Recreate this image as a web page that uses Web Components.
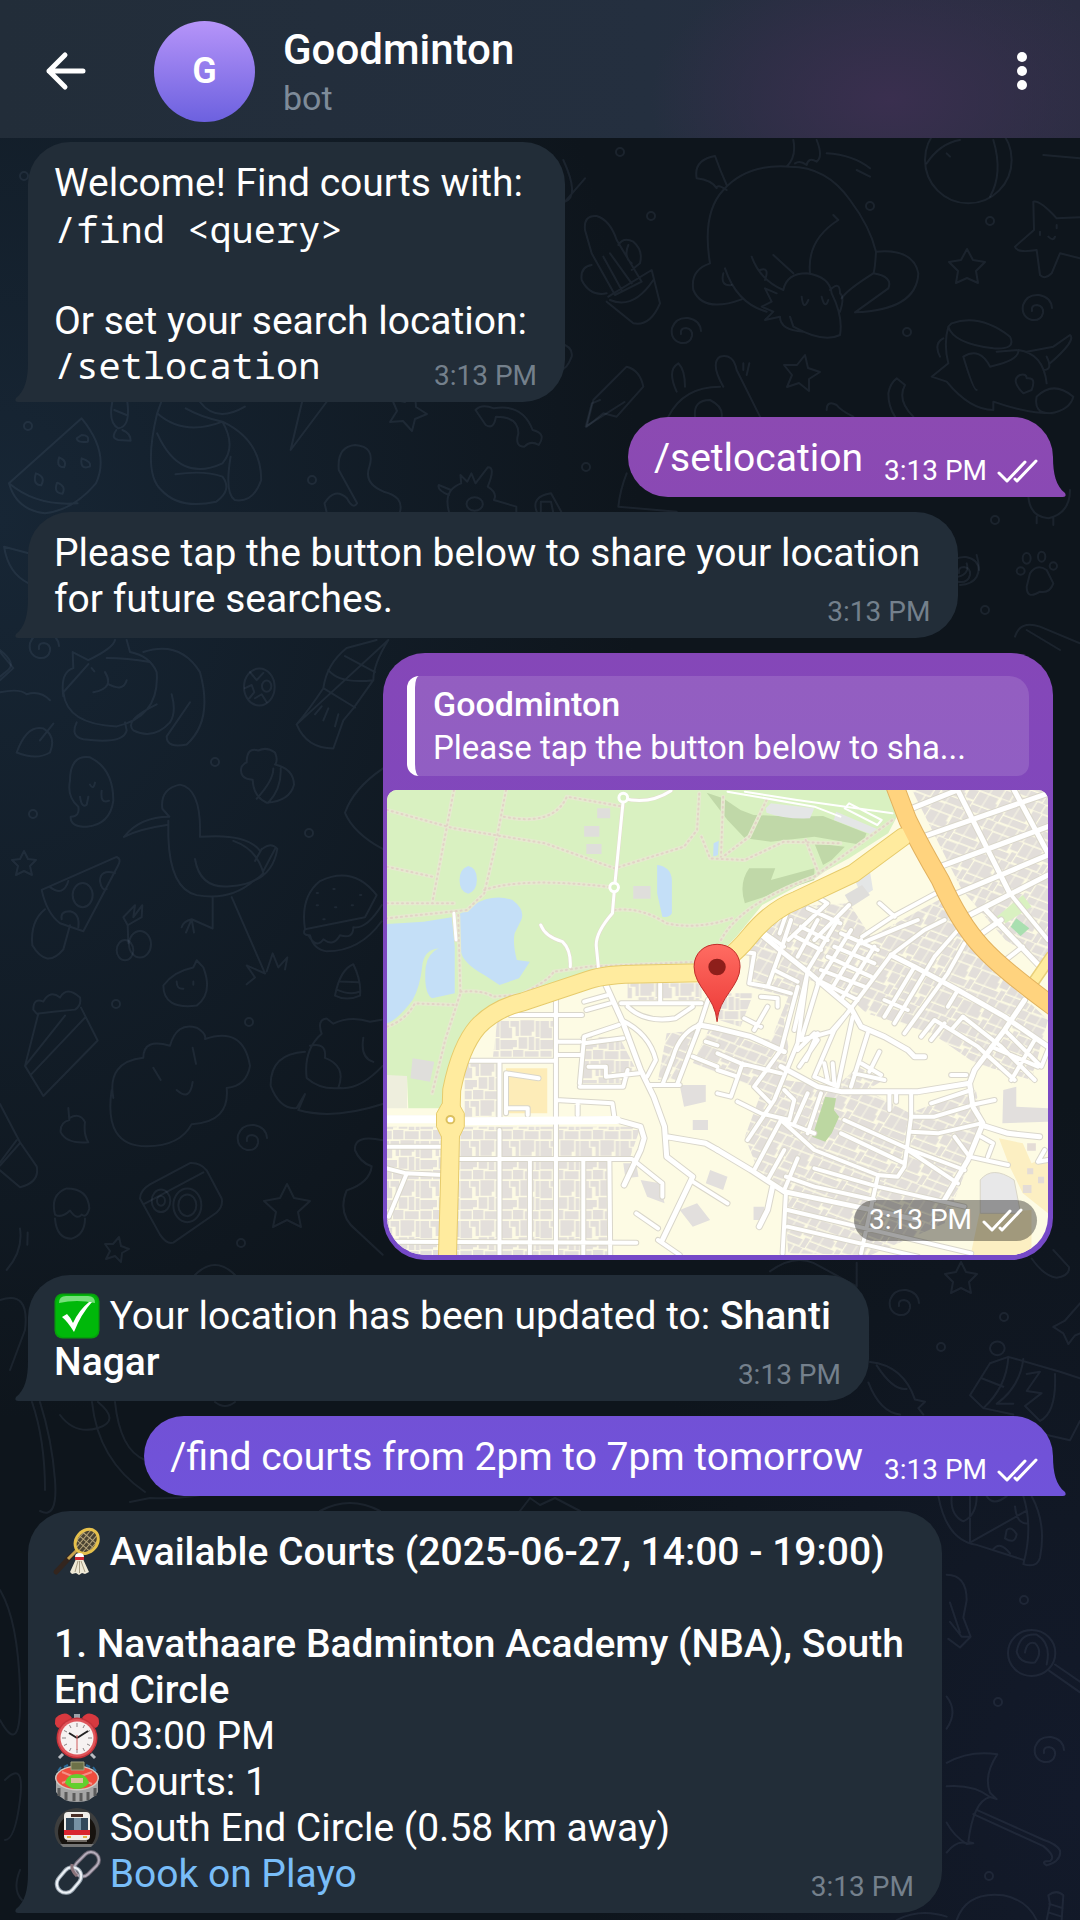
<!DOCTYPE html>
<html lang="en">
<head>
<meta charset="utf-8">
<meta name="viewport" content="width=device-width, initial-scale=1">
<title>Goodminton</title>
<style>
  html { background: #0e151d; }
  body { margin: 0; font-family: Roboto, "Noto Sans", sans-serif; color: #fff; }
</style>
</head>
<body>
<chat-app>
  <chat-header slot="header" name="Goodminton" status="bot" initial="G"></chat-header>

  <chat-bubble time="3:13 PM">Welcome! Find courts with:<br><mono-line>/find &lt;query&gt;</mono-line><br>Or set your search location:<br><mono-line>/setlocation</mono-line></chat-bubble>

  <chat-bubble out time="3:13 PM" style="--from:#8c4ab2;--to:#8a49b4">/setlocation</chat-bubble>

  <chat-bubble time="3:13 PM">Please tap the button below to share your location<br>for future searches.</chat-bubble>

  <location-bubble time="3:13 PM">
    <reply-quote name="Goodminton">Please tap the button below to sha...</reply-quote>
  </location-bubble>

  <chat-bubble time="3:13 PM"><emoji-icon name="check"></emoji-icon> Your location has been updated to: <b>Shanti<br>Nagar</b></chat-bubble>

  <chat-bubble out time="3:13 PM" style="--from:#7251d6;--to:#7053da">/find courts from 2pm to 7pm tomorrow</chat-bubble>

  <chat-bubble time="3:13 PM"><emoji-icon name="racket"></emoji-icon> <b>Available Courts (2025-06-27, 14:00 - 19:00)</b><br><br><b>1. Navathaare Badminton Academy (NBA), South<br>End Circle</b><br><emoji-icon name="clock"></emoji-icon> 03:00 PM<br><emoji-icon name="stadium"></emoji-icon> Courts: 1<br><emoji-icon name="metro"></emoji-icon> South End Circle (0.58 km away)<br><emoji-icon name="link"></emoji-icon> <a href="#book">Book on Playo</a></chat-bubble>
</chat-app>

<script>
const define = (name, html, setup) => {
  const template = document.createElement('template');
  template.innerHTML = html;
  customElements.define(name, class extends HTMLElement {
    constructor() {
      super();
      this.attachShadow({ mode: 'open' }).append(template.content.cloneNode(true));
    }
    connectedCallback() {
      if (setup && !this.ready) { this.ready = true; setup(this, this.shadowRoot); }
    }
  });
};

/* ---------- page shell ---------- */
define('chat-app', `
<style>
  :host { display: flex; flex-direction: column; min-height: 100vh; position: relative; isolation: isolate; overflow: hidden; }
  main { display: flex; flex-direction: column; align-items: flex-start; gap: 15px; padding: 4px 27px 7px 28px; }
</style>
<doodle-wallpaper></doodle-wallpaper>
<slot name="header"></slot>
<main><slot></slot></main>`);

/* ---------- header ---------- */
define('chat-header', `
<style>
  :host { display: block; }
  header { display: flex; align-items: center; box-sizing: border-box; min-height: 138px; padding: 4px 26px 0 34px;
    background: radial-gradient(ellipse 240px 150px at 890px 100px, #3a2f4f 0, #3a2f4f00 100%), linear-gradient(90deg, #222d39, #242f3f 60%, #2b2d42); }
  button { border: 0; padding: 0; background: none; color: #fff; display: flex; cursor: pointer; }
  .avatar { width: 101px; height: 101px; margin: 0 28px 0 56px; border-radius: 50%; display: grid; place-items: center;
    background: linear-gradient(#b694f9, #6c61df); font-size: 36px; font-weight: 600; line-height: 42px; }
  .who { flex: 1; min-width: 0; display: flex; flex-direction: column; gap: 3px; }
  h1 { margin: 0; font-size: 42px; line-height: 50px; font-weight: 500; }
  p { margin: 0; font-size: 34px; line-height: 40px; color: #7e8b99; }
</style>
<header>
  <button type="button" aria-label="Back"><svg width="64" height="64" viewBox="0 0 64 64" fill="none" stroke="#fff" stroke-width="5" stroke-linecap="round" stroke-linejoin="round"><path d="M49 32H15M31 16 15 32l16 16"/></svg></button>
  <div class="avatar" aria-hidden="true"></div>
  <div class="who"><h1></h1><p></p></div>
  <button type="button" aria-label="More options"><svg width="64" height="64" viewBox="0 0 64 64" fill="#fff"><circle cx="32" cy="18" r="5"/><circle cx="32" cy="32" r="5"/><circle cx="32" cy="46" r="5"/></svg></button>
</header>`, (el, root) => {
  root.querySelector('h1').textContent = el.getAttribute('name');
  root.querySelector('p').textContent = el.getAttribute('status');
  root.querySelector('.avatar').textContent = el.getAttribute('initial');
});

/* ---------- small parts ---------- */
define('mono-line', `
<style>
  :host { display: block; font-family: "Noto Sans Mono", "DejaVu Sans Mono", monospace; font-size: 37px; line-height: 46px; }
  :host(:last-child) { line-height: 42px; }
</style><slot></slot>`);

define('read-ticks', `
<style>:host { display: inline-flex; }</style>
<svg width="41" height="24" viewBox="0 0 41 24" fill="none" stroke="#fff" stroke-width="3" stroke-linecap="round" stroke-linejoin="round" role="img" aria-label="Read"><path d="M2 14l8 8L28 3M18 20l2 2L39 2"/></svg>`);

/* ---------- text bubble ---------- */
define('chat-bubble', `
<style>
  :host { display: grid; position: relative; max-width: 100%; box-sizing: border-box; padding: 18px 28px 16px 26px;
    background: #222d38; border-radius: 42px 42px 42px 0; font-size: 39px; line-height: 46px; }
  :host([out]) { align-self: flex-end; grid-template-columns: auto auto; gap: 21px; padding-right: 15px;
    border-radius: 40px 40px 0 40px; background: linear-gradient(var(--from), var(--to)); }
  .text, .meta { grid-area: 1 / 1; }
  .text { padding-right: 10px; }
  .meta { place-self: end; display: flex; align-items: center; gap: 10px; margin-bottom: -7px; font-size: 28px; line-height: 34px; color: #74808c; }
  :host([out]) .text { padding: 0; }
  :host([out]) .meta { grid-area: 1 / 2; color: #fff; }
  :host(:not([out])) read-ticks { display: none; }
  .tail { position: absolute; bottom: 0; left: -13px; fill: #222d38; }
  :host([out]) .tail { left: auto; right: -13px; transform: scaleX(-1); fill: var(--to); }
  ::slotted(b) { font-weight: 500; }
  ::slotted(a) { color: #79bdf8; text-decoration: none; }
</style>
<svg class="tail" width="14" height="40" viewBox="0 0 14 40" aria-hidden="true"><path d="M14 0H13C13 17 10 29 1 36Q-1 40 3 40H14Z"/></svg>
<div class="text"><slot></slot></div>
<div class="meta"><time></time><read-ticks></read-ticks></div>`, (el, root) => {
  root.querySelector('time').textContent = el.getAttribute('time');
});

/* ---------- quoted message ---------- */
define('reply-quote', `
<style>
  :host { display: block; overflow: hidden; box-sizing: border-box; padding: 6px 20px 6px 18px; border-left: 8px solid #fff; border-radius: 12px 20px 12px 12px;
    background: #ffffff20; font-size: 33px; line-height: 44px; }
  strong { display: block; font-size: 34px; font-weight: 500; }
  p { margin: 0; overflow: hidden; white-space: nowrap; text-overflow: ellipsis; }
</style>
<strong></strong><p><slot></slot></p>`, (el, root) => {
  root.querySelector('strong').textContent = el.getAttribute('name');
});

/* ---------- location bubble ---------- */
define('location-bubble', `
<style>
  :host { display: flex; flex-direction: column; align-self: flex-end; width: 670px; max-width: 100%; box-sizing: border-box; padding: 23px 5px 5px 4px;
    gap: 14px; border-radius: 42px; background: linear-gradient(#8547b8, #7549c8); }
  ::slotted(reply-quote) { margin: 0 19px 0 20px; }
  .map { position: relative; display: grid; }
  .badge { position: absolute; right: 11px; bottom: 14px; display: flex; align-items: center; gap: 10px; padding: 3px 14px 4px 15px; border-radius: 21px;
    background: #0000005c; font-size: 28px; line-height: 34px; }
</style>
<slot></slot>
<div class="map"><street-map></street-map><div class="badge"><time></time><read-ticks></read-ticks></div></div>`, (el, root) => {
  root.querySelector('time').textContent = el.getAttribute('time');
});

/* ---------- map drawing ---------- */
/* west half of the town */
const wide = [
  'M16 1018H130M195 1024L545 1020 600 1040 608 1075 600 1110 562 1215',
  'M660 1070L750 1090 777 1110',
  'M520 615L560 730 600 870 630 950 655 1040 660 1130 720 1190 650 1380',
  'M735 735L777 745',
  'M1225 85L1330 30M1255 168L1538 40M1285 262L1538 140M1315 348L1538 225M1350 410L1538 285M1375 470L1430 420',
  'M1330 30L1450 340M1460 30L1538 220M1395 390L1520 560',
].join('');
const thin = [
  'M16 1100H145M16 1165L60 1180 145 1185M60 1185L20 1310M180 1137H580L650 1210 650 1250',
  'M405 655V1425M275 850V1010M275 1050V1425M345 1137V1425M468 1137V1425M528 1137L530 1425M16 1385L590 1388M205 842H400M300 705H465M405 785H460M405 825H460M470 665L525 645M475 690L530 670',
  'M405 960L535 970 540 1015M455 965V1005M290 1000V880L365 895M290 985H340V1005',
  'M555 670H740M645 610V668M735 735Q690 760 675 830L650 915M555 720Q620 760 635 840L615 890M570 680Q610 730 680 715L720 680M755 660L735 740 685 910M460 910L470 770 550 735M470 790L560 775M460 920H560L570 870M480 860H520V890L595 880M620 915H690',
  'M850 480L940 385 920 460M875 450L930 500M1005 350L1030 370 940 480M1080 375L1000 480M985 385L1060 430M1280 340L1180 410 1110 470M1150 370L1185 410M720 1205L800 1270M590 1300L640 1345M640 1380L690 1425M750 785L777 796M720 830L777 860M1430 550L1480 500M1450 340L1538 480',
].join('');
/* east half, in its own finer frame */
const eastWide = [
  'M120 35L200 100 270 155 400 265 430 320 500 350 570 390 590 410H620',
  'M0 325L100 350 200 395M190 440L300 500 370 515H600L755 490 770 450 860 330 920 240',
  'M520 105L590 140 720 210 860 290 990 380M755 490L765 560 795 610 750 720 680 840',
  'M0 690L100 750 200 815 440 865 600 900M790 615L870 640 965 650M165 800L150 870 125 920',
].join('');
const eastThin = [
  'M0 400L70 430 190 460M0 450L60 470M0 520L40 530 75 430M190 90L150 200M240 200L190 390 110 500M270 155L230 330M360 0L270 150 240 370 170 540 90 660M190 600L110 750M305 180L250 360 340 335 380 290M240 390L290 340M245 440L300 360M265 420L300 340M400 265L350 330 290 470 360 500M405 290L360 500M450 340L400 500',
  'M250 20L330 60M235 50L310 90M370 40L480 90M350 80L470 130M330 110L460 170M310 150L440 200M300 180L420 240M300 190L400 30M340 210L430 60M370 240L470 80M400 265L520 105M220 0L190 90M300 0L240 110M430 70L550 20 600 0M520 105L620 30 680 0',
  'M500 290L590 140M530 310L650 110 720 30M560 340L690 160 740 70M500 240L570 270M610 350L650 300 700 330M640 360L680 310M690 260L720 210M700 330L735 290 850 380 950 480M700 330L780 380 890 480M820 380L960 440M860 330L970 440 990 390M880 480L950 360',
  'M700 465H745M410 460L500 480M430 430L490 465M485 395L455 455M320 430L330 480M345 430L350 490M580 515V590L560 740 540 770M515 520V570M535 520V545M580 590H650L750 560M580 635L660 640 790 610M640 550L760 510M760 555L830 540',
  'M710 650L755 710 870 735M790 650L825 670 810 710M380 600L580 690 740 750M370 640L560 730M540 770L480 765 290 690 190 600M290 745L480 800 740 860M240 715L200 810M480 770L430 1000M205 770L290 800 470 840M200 690L150 780M205 820L195 1000M210 870L420 920 760 1000M210 920L600 1010M570 690L720 790M980 690L960 725 990 720',
  'M60 545L130 580M110 500L160 550M130 580L215 600 230 540 200 510M270 520L230 610M310 520L270 640M190 600L290 640M70 95L110 100 95 190 150 200 220 220M130 230L180 235V260M150 260L110 330M80 295L130 320M170 150L240 185',
].join('');
const paths = 'M16 90L170 145 380 190 540 265 700 200 730 150 735 40M170 30L120 370M290 30L265 200 240 340 200 390 16 415M16 370H170M285 110Q400 140 430 50L560 80M16 260L120 290M240 330Q330 290 535 322M540 390Q600 380 660 430 730 450 810 415M785 480Q830 370 1000 290L1180 120M740 170L760 235 840 240 930 185 1060 190M790 50L785 230M890 60L850 170 790 230M980 180L1010 280M185 635Q240 630 260 650L320 645M180 405L185 640 150 780 120 940M16 740Q60 720 80 670L175 675M330 640Q390 600 400 575L480 560 740 545';
const ringRoad = 'M155 1440L160 1200 163 1018 165 930Q185 800 225 740 265 685 330 665L480 600Q520 582 600 582L740 578Q800 550 850 470 900 390 960 360L1090 280 1205 170';
const highway = 'M1183 10L1215 120Q1245 200 1290 300 1335 430 1385 500 1430 565 1550 680';
const lanes = 'M170 400L175 480M560 60L540 322 535 400Q495 460 498 500L503 565M560 55Q620 75 670 32M370 435Q380 470 420 485 440 510 438 560';
define('street-map', `
<style>
  :host { display: block; aspect-ratio: 661 / 465; overflow: hidden; border-radius: 10px 10px 38px 38px; }
  svg { display: block; width: 100%; height: 100%; }
  path, circle, ellipse { vector-effect: non-scaling-stroke; }
  .road path { fill: none; stroke-linecap: round; stroke-linejoin: round; }
</style>
<svg viewBox="16 30 1522 1395" preserveAspectRatio="none" role="img" aria-label="Map with a pin on the shared location">
  <defs>
    <pattern id="flat" width="92" height="120" patternUnits="userSpaceOnUse"><path d="M1 3h20v20h7v32H1zM24 3h20v45h-8V20H24zM47 1h32v34h-6v12H47zM82 3h9v48h-9zM1 60h38v22h-9v6H1zM1 92h26v26H1zM30 90h24v28H30zM43 52h20v34H43zM66 50h13v40H66zM82 55h9v35h-9zM57 94h32v24H57z" fill="#e3dfdb"/></pattern>
    <pattern id="slope" width="80" height="96" patternUnits="userSpaceOnUse" patternTransform="rotate(26)"><path d="M1 2h24v18h5v20H1zM32 1h22v30H34zM57 2h22v38H57zM1 44h38v20H1zM42 36h12v30H42zM57 44h22v20H57zM1 68h26v26H1zM30 68h20v26H30zM53 70h26v24H53z" fill="#e2deda"/></pattern>
    <linearGradient id="pin" x2="0" y2="1"><stop offset="0" stop-color="#ff6c62"/><stop offset="1" stop-color="#ec3a37"/></linearGradient>
  </defs>
  <path d="M0 0H1560V1440H0Z" fill="#fdfbe4"/>
  <path d="M16 1040H600L575 1135H525V1425H16ZM195 850H270V1010H195ZM270 720H400V830H260ZM460 770H550L590 870 560 910H460ZM570 610H740V660H570ZM780 640H860L830 740 780 720Z" fill="url(#flat)"/>
  <path d="M1225 30H1538V560L1440 480 1340 330ZM850 430L950 380 1080 370 1130 470 1300 350 1440 600 1538 720 1500 900 1370 850 1270 760 1120 700 1070 640 990 600 930 720 940 800 930 900 1050 920 1100 860 1160 900 1120 930 1220 1000 1370 920 1390 1040 1300 1330 1130 1425 940 1420 930 1250 870 1170 840 1070 880 930 720 850 760 740 900 780 940 650 850 620ZM660 760L740 750 690 900 640 900Z" fill="url(#slope)"/>
  <path d="M690 915h60v50l-50 15zM720 1020h35v30h-35zM690 1290l40-20 30 50-40 20zM760 1170l40 20-10 40-40-20zM860 1280h25v40h-25zM600 1200l45 10 10 60-40-20zM560 1150l30 0 5 40-30 5zM1435 930l30-10v60l73 5v40l-105 5z" fill="#e2dfdd"/>
  <path d="M290 865H385V1000H290Z" fill="#fdecb8"/>
  <path d="M1425 1075L1480 1090 1500 1150 1538 1130V1300L1480 1240 1450 1160ZM1380 1300L1500 1290V1425H1360Z" fill="#fcefc2"/>
  <path d="M1490 1090h20v22h-20zM1490 1165h14v18h-14zM1480 1215h20v24h-20zM1515 1190h14v20h-14z" fill="#e4dcd6"/>
  <path d="M1382 1300V1200Q1410 1155 1460 1200L1475 1300Z" fill="#e8e8e9" stroke="#d9d6c8"/>
  <path d="M1025 950L1050 955 1045 990 1057 1010 1040 1060 1025 1085 995 1070Z" fill="#bcd7a1"/>
  <path d="M1480 345L1500 380 1440 430 1420 410Z" fill="#d9f1c1"/><path d="M1465 415L1495 445 1475 468 1452 440Z" fill="#a9dfb0"/>
  <path d="M16 885H62V985H16Z" fill="#eeeedd"/>
  <path d="M16 30H1175L1190 110 1170 160 1080 235 880 375 820 470 760 550 500 570Q400 600 300 660 220 720 190 800 150 900 140 985H65L62 888 16 885Z" fill="#d9f1c1"/>
  <path d="M752 38L790 55 830 90 860 105 950 110 1020 108 1120 160 1110 195 1000 170 900 185 840 175 800 120ZM850 265L910 265 900 300 1000 265 1000 300 840 370Q825 310 850 265ZM1000 190L1070 200 1040 240 1020 255Z" fill="#c0d8a8"/>
  <path d="M888 85L900 70 1000 85 990 115Q930 118 890 98ZM1050 95L1150 150 1135 165 1045 120ZM1090 290L1125 250 1135 330 1110 350Z" fill="#e4e6e6"/>
  <path d="M470 138h35v32h-35zM500 85h30v30h-30zM475 192h35v30h-35zM583 318h40v38h-40zM75 835l50 10-10 60-45-10zM1070 345l40-30 18 30-42 35z" fill="#dfdedb"/>
  <path d="M16 432L100 425 165 412 172 500V640L120 655Q100 640 105 560 110 520 135 505 100 510 97 560 92 620 75 660 40 720 16 730ZM180 405L215 375Q260 340 305 360 335 390 325 420L310 460Q305 490 315 540L345 545 320 595 275 615 240 585Q190 550 185 510ZM638 255Q670 260 672 300V400Q665 415 650 410L638 340ZM768 190L780 182 778 225 767 230ZM203 258q20 5 20 40t-20 43q-20-5-20-40t20-43z" fill="#c4dff7"/>
  <g class="road">
    <path d="${paths}" stroke="#e6ead0" stroke-width="4"/><path d="${paths}" stroke="#e2d3c6" stroke-width="2" stroke-dasharray="1 4"/>
    <path d="${lanes}" stroke="#e3dccf" stroke-width="4"/><path d="${lanes}" stroke="#fff" stroke-width="3"/>
    <path d="M800 35L1000 80 1060 110M840 35L960 60 1180 100M1070 85L1080 70 1155 120 1145 135Z" stroke="#fff" stroke-width="2"/>
    <path d="${thin}" stroke="#d9d6ca" stroke-width="6"/><path d="${wide}" stroke="#d9d6ca" stroke-width="7"/>
    <g transform="translate(777 420) scale(.7687 1)"><path d="${eastThin}" stroke="#dad7cc" stroke-width="6"/><path d="${eastWide}" stroke="#dad7cc" stroke-width="7"/></g>
    <path d="${thin}" stroke="#fff" stroke-width="4"/><path d="${wide}" stroke="#fff" stroke-width="5"/>
    <g transform="translate(777 420) scale(.7687 1)"><path d="${eastThin}" stroke="#fff" stroke-width="4"/><path d="${eastWide}" stroke="#fff" stroke-width="5"/></g>
    <path d="M16 1018H130M195 1024L545 1020" stroke="#fff" stroke-width="8"/>
    <path d="M1500 615L1545 530" stroke="#e8cf7a" stroke-width="12"/><path d="M1500 615L1545 530" stroke="#ffec9f" stroke-width="9"/>
    <path d="${ringRoad}" stroke="#e6cb6c" stroke-width="19"/>
    <path d="${highway}" stroke="#e2b25f" stroke-width="19"/>
  </g>
  <path d="M143 970L130 1000V1040L143 1075H181L194 1040V1000L181 970Z" fill="#ffeb9e" stroke="#e6cb6c"/>
  <g class="road">
    <path d="${ringRoad}" stroke="#ffeb9e" stroke-width="17"/>
    <path d="${highway}" stroke="#ffd37e" stroke-width="17"/>
  </g>
  <ellipse cx="162" cy="1019" rx="9" ry="11" fill="#fff" stroke="#dcc05f" stroke-width="2"/>
  <ellipse cx="560" cy="53" rx="10" ry="13" fill="#d9f1c1" stroke="#fff" stroke-width="3"/><ellipse cx="539" cy="322" rx="10" ry="13" fill="#d9f1c1" stroke="#fff" stroke-width="3"/>
  <path d="M776 725C772 650 723 620 723 560 723 520 746 493 776 493S829 520 829 560C829 620 780 650 776 725Z" fill="url(#pin)" stroke="#bf2f2c" stroke-width="1"/>
  <ellipse cx="776" cy="561" rx="20" ry="25" fill="#8e1f1b"/>
</svg>`);

/* ---------- emoji ---------- */
const emoji = {
  check: ['Done', `<rect x=".5" y=".5" width="45" height="45" rx="8" fill="#079f0c"/><rect x="2" y="2" width="42" height="42" rx="7" fill="#00b80a"/><path d="M5 10Q5 3 12 3H34Q41 3 41 10Q23 6 5 10Z" fill="#76e07a"/><path d="M8 24l5-3q4 4 6 9 6-13 16-21h3Q27 21 20 39Q14 29 8 24Z" fill="#fff"/>`],
  racket: ['Badminton', `<path d="M2 43L17 27" stroke="#33251e" stroke-width="5" stroke-linecap="round"/><path d="M14 30L24 20" stroke="#c9a34e" stroke-width="3"/><g transform="rotate(40 33 12)"><ellipse cx="33" cy="12.500" rx="10.500" ry="13" fill="#4b4433"/><path d="M25 4V21M29 1V24M33 0V25M37 1V24M41 4V21M23 8H43M22 13H44M23 18H43" stroke="#b7a57b"/><ellipse cx="33" cy="12.500" rx="10.500" ry="13" fill="none" stroke="#e5c04c" stroke-width="3"/></g><path d="M22 30h7l6 13-4 2-3-1-3 2-3-2-4 1-2-2z" fill="#efe9d6"/><path d="M24 32l-3 11M25.500 32V44M27 32l4 11" stroke="#a99f87"/><path d="M21 28h9v3h-9z" fill="#d22c34"/><path d="M21 28q0-4 4.500-4t4.500 4z" fill="#fff"/>`],
  clock: ['Alarm clock', `<path d="M9 41l-4 4M37 41l4 4" stroke="#b9bcc2" stroke-width="3"/><path d="M1 11Q0 3 8 1q6-2 10 4L5 15Q2 14 1 11ZM45 11Q46 3 38 1 32-1 28 5L41 15Q44 14 45 11Z" fill="#d8393f"/><path d="M20 1h6v5h-6z" fill="#9da1a8"/><circle cx="23" cy="25" r="20.500" fill="#c7323a"/><circle cx="23" cy="25" r="19" fill="#df555a"/><circle cx="23" cy="25" r="16.500" fill="#f6f2f1"/><path d="M23 10v4M23 36v4M8 25h4M34 25h4M15.500 12l1.500 3M30.500 12l-1.500 3M10 17.500l3 1.500M36 17.500l-3 1.500M10 32.500l3-1.500M36 32.500l-3-1.500M15.500 38l1.500-3M30.500 38l-1.500-3" stroke="#8d8586"/><path d="M23 25L15 20M23 25L34 18" stroke="#222" stroke-width="2"/><path d="M23 22v15" stroke="#cf5b5b"/>`],
  stadium: ['Stadium', `<path d="M4 12l3-4M10 8l4-2M42 12l-3-4M36 8l-4-2" stroke="#2c6c9b" stroke-width="2"/><path d="M2 20V33Q8 43 23 43T44 33V20Z" fill="#a5a5a5"/><path d="M5 29v8M12 33v8M20 34v8M27 34v8M34 33v8M41 29v8" stroke="#5b5b5b" stroke-width="3"/><ellipse cx="23" cy="19" rx="22" ry="12.500" fill="#cfcac4"/><ellipse cx="23" cy="19" rx="20.500" ry="11" fill="#ef4d3e"/><path d="M8 13l30 12M8 24l30-11" stroke="#f69086" stroke-width="2"/><path d="M11 24q2-9 12-9t12 9q-5 6-12 6t-12-6z" fill="#63cf2e"/><path d="M17 19h12v5H17z" fill="#dcbf9f"/><path d="M17 3h13v8H17z" fill="#6d7148" stroke="#a3a37e"/>`],
  metro: ['Metro', `<path d="M5 39A22.500 22.500 0 1 1 41 39Z" fill="#3d3e3e"/><path d="M8 39A19 19 0 1 1 38 39Z" fill="#17130f"/><path d="M6 39h34l-3 3H9z" fill="#747575"/><rect x="10" y="7" width="26" height="28" rx="4" fill="#f1eee9"/><path d="M12 13h22v12H12z" fill="#32485a"/><path d="M20 13h7v12h-7z" fill="#7692a5"/><path d="M17 9h12v3H17z" fill="#4c3028"/><path d="M10 25h26v5H10z" fill="#d9252f"/><path d="M13 32h4M29 32h4" stroke="#e5b547" stroke-width="2"/><path d="M13 35h20v2H13z" fill="#6f6a64"/>`],
  link: ['Link', `<g fill="none"><g transform="rotate(45 32 14)"><rect x="24" y="-1" width="16" height="28" rx="8" stroke="#6d6673" stroke-width="4"/><rect x="24" y="-1" width="16" height="28" rx="8" stroke="#b5adbb" stroke-width="2"/></g><g transform="rotate(40 15 29)"><rect x="6" y="15" width="18" height="28" rx="9" stroke="#9aa6b1" stroke-width="4"/><rect x="6" y="15" width="18" height="28" rx="9" stroke="#eef2f7" stroke-width="2"/></g><path d="M18 13Q17 20 23 25" stroke="#8b747b" stroke-width="3"/></g>`],
};
define('emoji-icon', `
<style>:host { display: inline-block; vertical-align: top; width: 46px; height: 46px; } svg { display: block; overflow: visible; }</style>
<svg width="46" height="46" viewBox="0 0 46 46" role="img"></svg>`, (el, root) => {
  const [label, art] = emoji[el.getAttribute('name')];
  const svg = root.querySelector('svg');
  svg.setAttribute('aria-label', label);
  svg.innerHTML = art;
});

/* ---------- wallpaper ---------- */
const star = (x, y, r, turn = 0) => {
  let d = '';
  for (let i = 0; i < 10; i++) {
    const a = turn + i * Math.PI / 5 - Math.PI / 2, k = i % 2 ? r * 0.5 : r;
    d += (i ? 'L' : 'M') + Math.round(x + k * Math.cos(a)) + ' ' + Math.round(y + k * Math.sin(a));
  }
  return `<path d="${d}Z"/>`;
};
const dots = list => list.map(([x, y]) => `<circle cx="${x}" cy="${y}" r="4"/>`).join('');
const swirl = (x, y) => `<path transform="translate(${x} ${y})" d="M-3 1Q-4-5 2-5 9-4 8 3 6 11-3 10-14 7-12-5-8-16 4-15 16-13 17-2"/>`;
define('doodle-wallpaper', `
<style>
  :host { position: absolute; inset: 0; z-index: -1; overflow: hidden;
    background: radial-gradient(ellipse 640px 900px at 0 520px, #172635 0, #17263500 100%), radial-gradient(ellipse 500px 700px at 1080px 1800px, #131a2b 0, #131a2b00 100%), #0e151c; }
  svg { display: block; width: 100%; height: 100%; fill: none; stroke: #8fa9c0; stroke-opacity: .1; stroke-width: 2; stroke-linecap: round; stroke-linejoin: round; }
  path, circle, ellipse { vector-effect: non-scaling-stroke; }
</style>
<svg viewBox="0 0 1080 1920" preserveAspectRatio="xMidYMin slice" aria-hidden="true">
  ${dots([[620,152],[651,216],[870,206],[990,221],[907,332],[586,467],[995,520],[985,610],[28,426],[312,480],[33,814],[215,762],[309,833],[116,1004],[249,1022],[241,1243],[941,1347],[1004,1317],[1024,1600],[998,1702],[989,1876],[24,176]])}
  ${star(967,268,19)}${star(801,374,19,.2)}${star(407,412,20,.4)}${star(24,864,13)}${star(287,1208,24)}${star(116,1250,13,.2)}${star(961,1279,17)}
  ${swirl(684,333)}${swirl(1035,310)}${swirl(250,1140)}${swirl(902,1305)}${swirl(1047,1752)}${swirl(42,648)}${swirl(962,572)}
  <g transform="translate(560 130) scale(.33333)">
    <path d="M450 400Q425 250 490 180 560 100 690 110 800 110 870 210 930 290 948 365 1060 355 1075 430 1070 540 885 547M948 365Q945 420 940 430M885 547L985 475Q1000 440 940 430 860 480 845 505M450 400Q390 420 400 480 430 550 545 508M495 415Q530 520 620 545M500 180Q470 160 470 175 455 150 410 145 400 90 465 78 480 120 500 165M700 30Q710 80 680 110M770 30Q790 80 770 95 745 80 740 105 720 90 705 100M800 70Q880 75 930 115M890 120L930 140"/>
    <path d="M750 430Q740 330 835 270M835 270L820 255M575 380Q600 450 670 480 680 430 740 430 810 440 815 490 850 560 840 615 790 640 700 590M700 590L690 560M730 605Q660 600 660 560L615 570 640 545 605 530 635 515 615 475 650 490M640 375L700 430M725 500Q730 545 745 510M785 500Q795 540 805 510M810 480Q840 450 840 490 855 500 840 545M600 420Q630 410 615 450M490 430Q480 470 515 465"/>
    <path d="M75 300Q70 255 110 258 150 270 170 330L245 455 165 495 95 370ZM175 345Q190 320 220 335 250 360 240 400L215 420M205 345Q190 380 215 400M95 405Q60 410 65 450 90 500 140 490M130 380L185 480M150 370L215 460M145 500L275 420 300 520Q270 590 220 580L140 515M150 510Q220 540 280 450"/>
    <ellipse cx="1225" cy="90" rx="130" ry="130"/><path d="M1100 100Q1140 40 1200 30M1300 30Q1330 130 1290 200M1160 70L1170 80"/>
    <path d="M1420 215Q1440 210 1490 265L1560 262M1420 215L1422 300 1365 350Q1370 370 1430 360L1440 435Q1455 450 1475 430L1500 370 1560 385M1440 305v10M1490 285v10M1465 320q15 15 20 0"/>
    <path d="M1175 580Q1260 550 1350 620 1370 660 1300 655 1180 640 1165 590ZM1165 590Q1150 640 1165 700M1150 625Q1120 640 1140 680M1165 700L1115 740 1160 755Q1230 840 1300 840V815Q1400 850 1480 850M1210 680Q1240 780 1250 780M1210 680Q1260 650 1290 710 1380 690 1375 660 1450 670 1460 760M1375 660L1310 665M1460 680Q1480 720 1450 720M1400 665L1480 650 1530 615Q1550 630 1470 700M1390 790Q1350 750 1380 735 1400 730 1400 745 1430 740 1415 780ZM1430 800Q1480 750 1540 800 1530 840 1470 850 1420 850 1430 800"/>
    <path d="M80 890L100 810 200 710Q240 720 250 770L170 860 130 850ZM350 785Q320 720 355 700 375 720 375 770M490 770Q450 700 480 680 520 670 530 720L600 860M325 860Q370 770 480 770M405 860Q400 810 450 810 490 830 485 860M550 700v20M568 700l-8 35M985 790Q990 760 1010 745L1035 765Q1010 810 1060 860M985 790Q985 830 1005 860M880 860Q840 840 830 825 800 810 800 840"/>
    <path d="M200 1030Q180 1080 175 1130L350 1145M1405 1100Q1410 1160 1465 1165 1530 1150 1530 1080M1430 1160v20M1480 1165v20M1250 1275Q1275 1360 1200 1365M1195 1340Q1230 1330 1220 1300M1410 1330Q1430 1300 1460 1320L1480 1360Q1470 1390 1440 1385 1400 1410 1400 1370ZM1365 1520Q1380 1470 1440 1490L1560 1540M1400 1500L1500 1560M0 640Q40 650 35 680 20 720 0 720M10 90Q60 200 15 215L75 145M1450 75L1560 85"/>
    <ellipse cx="1400" cy="1285" rx="12" ry="16"/><ellipse cx="1445" cy="1280" rx="11" ry="15"/><ellipse cx="1480" cy="1308" rx="11" ry="11"/><ellipse cx="1382" cy="1323" rx="12" ry="11"/>
  </g>
  <g transform="translate(0 380) scale(.40816 .33333)">
    <path d="M22 310L200 115Q270 220 235 310 180 390 110 400 40 390 22 310Q90 380 190 370M200 165q20 0 15 20-25 5-27-10zM145 232q20 10 12 30-20 0-12-30zM200 235q25 10 20 25-25 10-20-25zM88 280q25 10 13 36-22-2-13-36zM140 308q23 10 13 33-23-2-13-33zM275 66Q265 130 290 145 320 140 312 66M280 90L310 105M285 150Q270 175 290 180L320 182Q320 160 300 150M395 66L385 100Q350 280 395 330 440 390 530 365 570 330 545 290 500 270 430 283M385 100Q450 170 545 125 580 200 545 250 440 310 385 160M455 85Q490 110 545 125 640 180 640 300 620 370 575 360 550 340 565 230M490 66Q530 130 600 80M740 66L712 210 800 66"/>
    <path d="M830 270Q825 200 870 195 920 200 905 260 890 310 940 335 990 350 980 395M830 270L875 370Q865 390 850 355 820 320 795 370L800 395M1100 395Q1085 330 1130 310L1128 285 1145 305 1155 280 1165 310 1195 262Q1215 260 1195 320 1220 340 1210 360L1265 380V395M1100 345Q1070 330 1075 315L1105 330M1315 395Q1300 350 1350 340L1375 395M1325 395V365H1350L1355 395M1165 90Q1180 70 1210 85 1280 70 1305 150 1340 160 1320 195 1300 180 1285 200 1260 200 1270 160 1270 110 1215 110 1210 150 1190 135L1165 90M1435 140L1450 70 1470 60M1435 140L1530 66M10 500L70 520M10 500Q20 580 70 610M0 810Q40 850 20 870L0 890"/><circle cx="1163" cy="372" r="20"/>
  </g>
  <g transform="translate(0 640) scale(.33333 .40177)">
    <path d="M190 140Q180 80 220 70L218 30 265 50Q340 20 345 0M380 0L390 30Q450 40 470 80 480 190 350 215 200 210 190 130L265 60M320 45Q380 45 450 55M430 30Q540 0 600 80 640 200 560 260 500 270 500 240L570 155M515 135Q530 180 510 205M510 205Q460 250 400 225 370 200 470 160M230 205Q210 240 250 247 370 260 380 225L375 205M275 70l8 8M315 80Q345 120 280 130M325 110Q370 130 380 100M0 130Q60 120 80 135 120 125 150 150M0 30L40 70 0 100M50 280Q80 210 130 220 170 240 150 280 110 300 50 280M120 250L160 208"/>
    <path d="M210 350Q210 285 270 292 340 320 340 400 330 460 260 465 210 465 212 440 240 440 235 415 200 390 210 350ZM240 390q5 30 20 20l5-20M305 375q-5 35 22 25M270 360q10 15 15-5"/>
    <path d="M505 450V490Q510 620 590 635 690 650 760 600 820 580 832 520 810 500 780 525 740 480 600 490 605 370 540 360 480 370 487 420L508 440Q420 440 372 490 420 470 505 460M585 545Q600 620 690 613 760 610 790 580 770 520 700 500M765 550L785 520M790 575L825 520M638 640V718L575 695M575 695Q550 700 545 715M575 695L558 728M575 695L582 728M695 640L795 830 740 810 765 840 740 857M800 825L818 780 835 815 862 790 855 820"/>
    <path d="M125 622L350 540Q365 545 355 560L250 725 180 705Q140 680 125 622ZM135 670Q90 700 97 760 140 820 190 770L210 710M150 615Q190 640 205 600M345 580Q300 570 300 600 305 625 320 620M185 695Q180 675 210 675 240 680 235 715"/><circle cx="248" cy="635" r="30"/><circle cx="420" cy="757" r="33"/><circle cx="375" cy="772" r="25"/><path d="M385 755L383 710 425 690 427 660 400 690 405 660 370 690 383 710"/>
    <path d="M490 860Q520 825 580 815L590 797 610 815Q640 880 590 910 490 920 490 860ZM530 850q0 20 20 18M580 850v8M100 920Q100 890 130 900 150 870 180 890 200 860 240 890 245 910 225 920L160 925 110 930ZM115 930L75 1060 130 1135 293 997 243 915M75 1060L195 935M95 1080L255 940M340 1140Q320 1050 430 1040 430 990 510 1010 530 950 590 965 620 980 615 993 730 960 750 1060 740 1110 680 1115 690 1200 575 1205 540 1260 440 1260 310 1260 335 1120M460 1065L482 1095M578 1015L588 1055M530 1120Q570 1150 578 1100M205 1165L208 1195Q180 1200 182 1225 200 1255 265 1250 250 1230 255 1200 240 1175 208 1190"/>
    <path d="M0 1155L60 1250 110 1310Q120 1350 60 1362L0 1320M0 1300L50 1245M0 1308L60 1252M165 1430Q150 1380 200 1365 265 1365 268 1415 260 1440 245 1430 230 1445 210 1420 185 1440 165 1430ZM165 1440Q170 1490 215 1490 255 1480 255 1440M60 1465Q70 1520 20 1568M83 1475L82 1505M420 1390Q420 1370 450 1355L570 1302Q600 1300 620 1320L665 1390Q670 1410 650 1425L520 1500Q500 1505 480 1480ZM430 1405L610 1325"/><circle cx="483" cy="1396" r="28"/><circle cx="483" cy="1396" r="12"/><circle cx="562" cy="1407" r="42"/><circle cx="562" cy="1407" r="27"/>
    <path d="M890 210Q930 170 970 120 980 60 1040 20L1130 0M1165 0Q1120 60 1120 100L1060 170 1030 200 1000 270Q920 270 890 210ZM985 75Q1020 110 1120 100M1035 40L1125 80M970 120L1065 168M965 165l-20 20M985 170l-15 30M1015 185l-10 30M740 305Q740 265 775 275 800 265 825 280 835 300 825 310 880 320 882 360 870 400 800 405 760 390 758 348 715 345 725 315 735 305 740 305ZM770 395Q820 350 820 320M805 405Q845 370 842 320"/><circle cx="778" cy="117" r="46"/><circle cx="800" cy="115" r="14"/><path d="M735 120l20-8 8 18-15 15M750 80l20 20 20-18M765 145l20-10 15 20"/>
    <path d="M915 720Q900 640 960 600 1060 560 1130 635L1095 690 915 720Q905 735 930 735 940 770 980 775 1080 775 1145 700M925 735Q950 770 970 745 1000 765 1020 735 1060 745 1060 715 1100 720 1145 660M950 630h4M1000 620h4M1080 635h4M950 660h4M1005 665h4M1055 660h4M970 695h4M1005 885Q1020 820 1060 807 1085 850 1080 885 1040 900 1005 885M1020 850L1075 852M1010 870Q1050 885 1080 875M965 980Q950 945 980 942L1000 955Q1050 935 1110 950L1145 945M965 980Q910 1020 920 1090 960 1120 1020 1115 1080 1120 1148 1060M915 1025Q810 1030 812 1110 840 1170 890 1165L915 1130 895 1170Q1000 1195 1148 1155M930 1010Q980 1000 975 1040 1040 1060 1015 1115M1090 990Q1080 1040 1120 1050M1148 320Q1060 370 1035 430 1060 480 1148 520M1148 1245Q1060 1230 1065 1270 1080 1300 1115 1310 1110 1350 1040 1370 1010 1430 1070 1470L1148 1530"/>
  </g>
  <g transform="translate(760 1250) scale(.33333 .42735)">
    <path d="M815 20Q850 60 890 65 930 60 927 40L880 0M30 50Q100 10 160 30L290 85V30M330 262Q430 270 465 350L495 355 475 370 490 385M325 310Q360 380 420 385M350 270Q400 330 440 325M880 180L915 165 960 125M880 180L910 195 925 220 945 200 960 195M690 265L630 340 670 370 760 385M690 265L745 250 900 285 960 300M745 250Q740 320 670 370M790 255Q780 320 710 360H760M665 300L730 320M800 290L840 285 800 330 845 335 795 365 840 400M885 290Q890 380 840 400M845 430L930 445 960 400"/><ellipse cx="712" cy="230" rx="22" ry="16"/>
    <path d="M535 576Q560 680 650 690L790 725M815 576Q860 640 840 720 830 745 790 735 820 650 790 576M630 576V685M630 685L800 610M575 576Q570 620 610 635 650 620 650 576M700 700Q720 680 750 710M740 655q15-10 30 10-5 25-35 10zM680 576q20 25 60 0M765 600Q770 640 800 640M560 760Q620 760 620 820L610 860 632 905 600 930 565 910M570 825L600 895M570 870L605 905 632 905M560 1045Q595 1080 560 1120"/>
    <path d="M795 942Q800 915 825 920 850 940 825 965 780 970 770 940 780 895 830 900 875 920 860 970"/><ellipse cx="815" cy="943" rx="71" ry="54"/><path d="M868 985L960 1035M885 970L960 1010M560 1200Q630 1170 712 1180 670 1230 690 1270L710 1285 690 1280Q640 1290 625 1385L640 1388 620 1390Q580 1370 560 1340M560 1255Q640 1250 690 1280M640 1320L850 1395Q890 1420 870 1430 840 1430 860 1440 905 1430 900 1405 890 1390 850 1380L650 1310M560 1410Q590 1380 620 1388M590 1568Q620 1500 730 1510 800 1520 830 1568M410 1568Q480 1540 560 1560M860 1568L870 1530 865 1510Q890 1495 910 1510L905 1568M868 1530L908 1540M865 1550L905 1560"/>
  </g>
  <path d="M40 1402Q52 1440 55 1480T40 1511M32 1402Q45 1440 45 1490M60 1415Q75 1435 98 1428T98 1402M92 1402Q98 1460 145 1492M115 1402Q120 1450 145 1460M215 1402Q225 1410 235 1402M130 1502L150 1498Q190 1500 220 1490M320 1511Q350 1495 380 1511M520 1511L530 1498 540 1505 555 1498 580 1511M195 1275Q215 1255 235 1275M0 1300Q30 1290 25 1330L10 1370M0 1590Q18 1620 20 1690T0 1720M5 1780Q25 1760 20 1800T5 1840M20 1870Q12 1890 22 1900"/>
</svg>`);
</script>
</body>
</html>
